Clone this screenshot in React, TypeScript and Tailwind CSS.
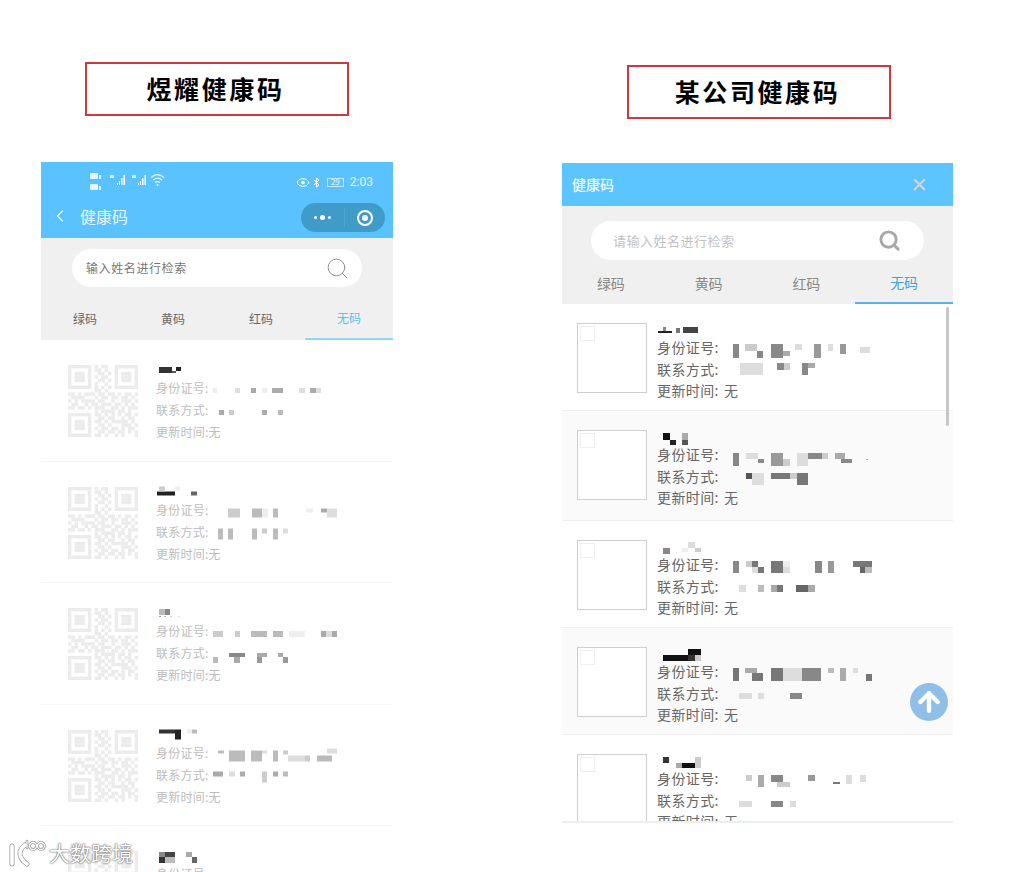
import { ArrowUp, ChevronLeft, Search, X } from 'lucide-react'

type Block = [number, number, number, number, string]

type LeftRow = { name: Block[]; id: Block[]; phone: Block[] }

const CJK = "font-['Noto_Sans_CJK_SC','Noto_Sans',sans-serif]"

const QR = [
  '111111101011001111111',
  '100000101101001000001',
  '101110100110101011101',
  '101110101011001011101',
  '101110100110101011101',
  '100000101001001000001',
  '111111101010101111111',
  '000000001101000000000',
  '110101110110110101101',
  '011110001011011011010',
  '101011110110010011101',
  '011001011011101101010',
  '110110101110011010111',
  '000000001011110110100',
  '111111101101010101101',
  '100000100110110010110',
  '101110101101011111010',
  '101110100110100011101',
  '101110101011011010110',
  '100000100110110110101',
  '111111101101001010001',
]

const leftRows: LeftRow[] = [
  {
    name: [[159, 172, 367, 373, '#333'], [172, 176, 371, 373, '#555'], [176, 181, 367, 371, '#222']],
    id: [
      [213, 217, 388, 393, '#eee'], [235, 240, 388, 393, '#ddd'], [251, 256, 388, 393, '#aaa'],
      [262, 267, 388, 393, '#eee'], [272, 283, 388, 393, '#aaa'], [299, 305, 388, 393, '#ddd'],
      [310, 316, 388, 393, '#aaa'], [316, 321, 388, 393, '#ddd'],
    ],
    phone: [[219, 224, 410, 415, '#aaa'], [229, 234, 410, 415, '#ccc'], [262, 267, 410, 415, '#aaa'], [278, 283, 410, 415, '#bbb']],
  },
  {
    name: [[157, 175, 491, 495, '#222'], [159, 165, 486, 491, '#ccc'], [175, 180, 486, 490, '#eee'], [191, 197, 491, 495, '#666']],
    id: [
      [228, 240, 508, 517, '#ccc'], [252, 262, 508, 517, '#bbb'], [262, 268, 508, 517, '#eee'], [273, 278, 508, 517, '#bbb'],
      [306, 313, 508, 512, '#eee'], [321, 327, 508, 512, '#aaa'], [327, 337, 508, 517, '#ddd'],
    ],
    phone: [
      [218, 223, 528, 539, '#bbb'], [228, 233, 528, 539, '#bbb'], [252, 257, 528, 539, '#bbb'],
      [262, 267, 528, 533, '#ccc'], [273, 278, 528, 539, '#bbb'], [283, 288, 528, 533, '#ddd'],
    ],
  },
  {
    name: [[159, 165, 609, 615, '#bbb'], [165, 170, 609, 615, '#888'], [159, 161, 616, 617, '#999'], [164, 166, 616, 617, '#bbb'], [170, 172, 616, 617, '#ccc'], [178, 180, 616, 617, '#ddd']],
    id: [
      [213, 223, 631, 637, '#ccc'], [235, 240, 631, 637, '#ccc'], [251, 267, 631, 637, '#bbb'], [273, 283, 631, 637, '#bbb'],
      [289, 305, 631, 637, '#eee'], [321, 326, 631, 637, '#aaa'], [326, 332, 631, 637, '#ddd'], [332, 337, 631, 637, '#aaa'],
    ],
    phone: [
      [213, 218, 657, 663, '#bbb'], [229, 245, 653, 657, '#888'], [234, 240, 657, 663, '#aaa'],
      [257, 267, 653, 657, '#aaa'], [257, 262, 657, 663, '#999'], [278, 283, 653, 657, '#aaa'], [283, 288, 657, 663, '#999'],
    ],
  },
  {
    name: [[159, 175, 729, 733, '#333'], [175, 181, 729, 739, '#222'], [187, 192, 729, 733, '#eee'], [192, 197, 729, 733, '#bbb']],
    id: [
      [218, 224, 750, 753, '#bbb'], [229, 245, 750, 761, '#bbb'], [251, 262, 750, 761, '#bbb'], [262, 267, 750, 753, '#ddd'],
      [273, 278, 750, 761, '#bbb'], [283, 288, 750, 754, '#ccc'], [288, 305, 755, 761, '#ddd'], [305, 310, 755, 761, '#ccc'],
      [317, 332, 755, 761, '#bbb'], [327, 337, 748, 753, '#ddd'],
    ],
    phone: [[213, 223, 771, 776, '#aaa'], [229, 235, 771, 776, '#ddd'], [240, 245, 771, 776, '#aaa'], [262, 267, 771, 782, '#ccc'], [273, 278, 771, 776, '#aaa'], [283, 288, 771, 776, '#bbb']],
  },
  {
    name: [[159, 170, 852, 857, '#888'], [165, 175, 852, 857, '#444'], [159, 165, 857, 863, '#333'], [165, 175, 857, 863, '#bbb'], [186, 192, 852, 857, '#aaa'], [192, 197, 857, 863, '#666']],
    id: [],
    phone: [],
  },
]

const rightTops = [304, 411, 521, 628, 735]
const rightHeights = [107, 110, 107, 107, 107]

const rightRows: LeftRow[] = [
  {
    name: [[658, 672, 331, 333, '#222'], [663, 666, 327, 331, '#888'], [676, 680, 328, 333, '#777'], [683, 698, 327, 333, '#444']],
    id: [
      [733, 739, 344, 358, '#888'], [745, 757, 344, 351, '#ccc'], [757, 763, 351, 358, '#888'], [771, 783, 344, 358, '#888'],
      [783, 790, 351, 356, '#aaa'], [795, 802, 344, 350, '#ddd'], [814, 821, 344, 358, '#999'], [828, 833, 344, 351, '#ddd'],
      [840, 846, 344, 354, '#999'], [860, 870, 347, 353, '#ddd'],
    ],
    phone: [[740, 763, 363, 375, '#ddd'], [777, 784, 363, 370, '#888'], [784, 790, 363, 370, '#ccc'], [802, 808, 363, 375, '#888'], [808, 815, 363, 368, '#aaa']],
  },
  {
    name: [[663, 670, 433, 440, '#111'], [670, 676, 440, 445, '#222'], [682, 688, 433, 440, '#aaa'], [682, 688, 440, 445, '#555']],
    id: [
      [733, 739, 453, 466, '#888'], [746, 758, 453, 459, '#ddd'], [758, 764, 459, 463, '#888'], [771, 783, 453, 466, '#999'],
      [783, 790, 459, 466, '#ccc'], [797, 808, 453, 466, '#ddd'], [808, 822, 453, 459, '#888'], [822, 828, 453, 459, '#ccc'],
      [835, 845, 453, 459, '#aaa'], [841, 852, 459, 463, '#888'], [866, 868, 459, 460, '#aaa'],
    ],
    phone: [[746, 752, 473, 479, '#555'], [752, 764, 473, 485, '#ddd'], [771, 790, 473, 479, '#777'], [790, 797, 473, 479, '#ccc'], [797, 808, 473, 485, '#777']],
  },
  {
    name: [[663, 670, 548, 554, '#888'], [682, 688, 548, 552, '#eee'], [688, 695, 542, 548, '#ddd'], [695, 701, 548, 552, '#ccc']],
    id: [
      [733, 739, 561, 573, '#888'], [746, 752, 561, 567, '#ccc'], [752, 758, 561, 567, '#777'], [752, 758, 567, 573, '#ddd'],
      [758, 764, 567, 573, '#777'], [771, 783, 561, 573, '#777'], [783, 790, 567, 573, '#ddd'], [783, 790, 561, 567, '#eee'],
      [815, 822, 561, 573, '#888'], [828, 834, 561, 573, '#999'], [853, 872, 561, 567, '#777'], [860, 865, 567, 573, '#666'], [865, 872, 567, 573, '#bbb'],
    ],
    phone: [[739, 746, 585, 592, '#ddd'], [758, 764, 585, 592, '#bbb'], [771, 777, 585, 592, '#aaa'], [777, 783, 585, 592, '#777'], [796, 808, 585, 592, '#666'], [808, 815, 585, 592, '#aaa']],
  },
  {
    name: [[663, 688, 655, 661, '#111'], [688, 701, 649, 655, '#111'], [688, 695, 655, 661, '#333'], [695, 701, 655, 661, '#ccc']],
    id: [
      [733, 739, 668, 681, '#777'], [745, 757, 668, 673, '#aaa'], [752, 763, 673, 681, '#777'], [771, 783, 668, 681, '#777'],
      [783, 802, 668, 681, '#ddd'], [802, 821, 668, 681, '#888'], [828, 834, 668, 673, '#bbb'], [840, 846, 668, 681, '#aaa'],
      [853, 858, 668, 673, '#ddd'], [866, 872, 674, 681, '#777'],
    ],
    phone: [[739, 752, 693, 699, '#ddd'], [758, 764, 693, 699, '#ddd'], [790, 802, 693, 699, '#888']],
  },
  {
    name: [[663, 669, 757, 763, '#333'], [676, 682, 763, 768, '#aaa'], [682, 695, 763, 768, '#111'], [695, 701, 757, 768, '#ccc']],
    id: [
      [746, 752, 775, 781, '#ccc'], [758, 764, 775, 787, '#aaa'], [771, 783, 775, 782, '#888'], [777, 790, 782, 787, '#ccc'],
      [808, 815, 775, 781, '#999'], [833, 840, 782, 784, '#777'], [846, 852, 775, 784, '#ddd'], [860, 866, 775, 782, '#ddd'],
    ],
    phone: [[739, 752, 801, 807, '#ddd'], [771, 783, 801, 807, '#888'], [790, 796, 801, 807, '#ddd']],
  },
]

// pixelated bits use page coordinates, the viewBox shifts them into the row
function Mosaic({ x, y, w, blocks }: { x: number; y: number; w: number; blocks: Block[] }) {
  return (
    <svg
      width={w}
      height={22}
      viewBox={`${x} ${y} ${w} 22`}
      className="shrink-0 overflow-visible blur-[0.5px]"
    >
      {blocks.map(([x1, x2, y1, y2, c], i) => (
        <rect key={i} x={x1} y={y1} width={x2 - x1} height={y2 - y1} fill={c} />
      ))}
    </svg>
  )
}

function QrCode() {
  return (
    <svg width={70} height={72} viewBox="0 0 21 21" preserveAspectRatio="none" className="shrink-0 blur-[0.7px]">
      {QR.map((line, y) =>
        line.split('').map((v, x) =>
          v === '1' ? <rect key={`${x}-${y}`} x={x} y={y} width={1} height={1} fill="#ebebeb" /> : null
        )
      )}
    </svg>
  )
}

function TitleBox({ text, className }: { text: string; className: string }) {
  return (
    <div
      className={`flex h-[54px] w-[264px] items-center justify-center border-2 border-[#cb3a40] pr-[3px] text-[25px] font-bold tracking-[2.6px] text-black ${className}`}
    >
      {text}
    </div>
  )
}

function StatusIcons() {
  return (
    <svg width={85} height={28} viewBox="0 0 85 28" className="blur-[0.3px]">
      <rect x={5} y={5} width={8} height={6} rx={1} fill="#e4f5ff" />
      <rect x={5} y={16} width={8} height={6} rx={1} fill="#e4f5ff" />
      <rect x={14} y={7} width={2} height={4} fill="#e4f5ff" />
      <rect x={14} y={18} width={2} height={4} fill="#e4f5ff" />
      <rect x={25} y={7} width={4} height={3} fill="#cfeeff" />
      <rect x={32} y={15} width={1} height={2} fill="#fff" />
      <rect x={34} y={13} width={1} height={4} fill="#fff" />
      <rect x={36} y={10} width={1.5} height={7} fill="#fff" />
      <rect x={38.500} y={7} width={1.5} height={10} fill="#fff" />
      <rect x={47} y={7} width={4} height={3} fill="#cfeeff" />
      <rect x={53} y={15} width={1} height={2} fill="#fff" />
      <rect x={55} y={13} width={1} height={4} fill="#fff" />
      <rect x={57} y={10} width={1.5} height={7} fill="#fff" />
      <rect x={59.500} y={7} width={1.5} height={10} fill="#fff" />
      <path d="M66 9.5c4-3.5 9-3.5 13 0M68 12c3-2.5 6-2.5 9 0M70 14.500c2-1.500 3-1.500 5 0" fill="none" stroke="#eaf8ff" strokeWidth={1.1} />
      <circle cx={72.500} cy={17} r={1} fill="#eaf8ff" />
    </svg>
  )
}

function LeftPanel() {
  return (
    <div className="overflow-hidden">
      <div className="h-[76px] bg-[#5ac2fe]">
        <div className="flex h-[35px] justify-between pl-[44px] pr-[20px] pt-[6px]">
          <StatusIcons />
          <div className="mt-[6px] flex h-[16px] items-center gap-[4px] text-[12px] text-[#e6f6ff]">
            <svg width={12} height={9} viewBox="0 0 12 9">
              <ellipse cx={6} cy={4.500} rx={5.500} ry={3.800} fill="none" stroke="#fff" />
              <circle cx={6} cy={4.500} r={1.800} fill="#fff" />
            </svg>
            <svg width={7} height={11} viewBox="0 0 7 11">
              <path d="M1 3l5 5-2.500 2V1L6 3 1 8" fill="none" stroke="#fff" />
            </svg>
            <span className="ml-[3px] flex h-[9px] w-[17px] items-center justify-center border border-[#bfe8ff] text-[8px]">29</span>
            <span className="ml-[2px] font-['Roboto',sans-serif]">2:03</span>
          </div>
        </div>
        <div className="flex h-[41px] items-center justify-between pl-[9px] pr-[8px]">
          <div className="-mt-[3px] flex items-center text-[16px] text-[#eaf7ff]">
            <ChevronLeft size={20} strokeWidth={1.5} />
            <span className="ml-[10px]">健康码</span>
          </div>
          <div className="flex h-[29px] w-[84px] items-center rounded-full bg-[#3f9cc9]">
            <div className="flex w-[43px] items-center justify-center gap-[3px]">
              <span className="size-[3px] rounded-full bg-white" />
              <span className="size-[5px] rounded-full bg-white" />
              <span className="size-[3px] rounded-full bg-white" />
            </div>
            <div className="h-[19px] w-px bg-[#4ba7d3]" />
            <div className="ml-[12px] flex size-[16px] items-center justify-center rounded-full border-2 border-white">
              <span className="size-[6px] rounded-full bg-white" />
            </div>
          </div>
        </div>
      </div>

      <div className="h-[102px] bg-[#f0f0f0] pt-[11px]">
        <div className="mx-[31px] flex h-[38px] items-center justify-between rounded-full bg-white pl-[14px] pr-[12px] text-[12px] tracking-[0.6px] text-[#777]">
          <span>输入姓名进行检索</span>
          <Search size={25} strokeWidth={0.9} className="text-[#888]" />
        </div>
        <div className="mt-[11px] flex h-[42px] text-[12px] text-[#666]">
          <div className="flex flex-1 items-center justify-center">绿码</div>
          <div className="flex flex-1 items-center justify-center">黄码</div>
          <div className="flex flex-1 items-center justify-center">红码</div>
          <div className="flex flex-1 items-center justify-center border-b-2 border-[#8fd6f2] text-[#5ac0ea]">无码</div>
        </div>
      </div>

      <div>
        {leftRows.map((row, i) => {
          const top = 340 + i * 121.5
          return (
            <div key={i} className="flex h-[121.5px] items-start gap-[18px] border-b border-[#f6f6f6] pl-[27px] pt-[15px]">
              <div className="mt-[10px]">
                <QrCode />
              </div>
              <div className="whitespace-nowrap text-[12px] leading-[22px] tracking-[0.25px] text-[#bdbdbd]">
                <Mosaic x={156} y={top + 15} w={100} blocks={row.name} />
                <div className="flex">
                  <span className="w-[52px] shrink-0">身份证号:</span>
                  <Mosaic x={208} y={top + 37} w={130} blocks={row.id} />
                </div>
                <div className="flex">
                  <span className="w-[52px] shrink-0">联系方式:</span>
                  <Mosaic x={208} y={top + 59} w={130} blocks={row.phone} />
                </div>
                <div>更新时间:无</div>
              </div>
            </div>
          )
        })}
      </div>
    </div>
  )
}

function RightPanel() {
  return (
    <div>
      <div className="flex h-[43px] items-center justify-between bg-[#5cc5ff] pl-[10px] pr-[24px] text-[14px] font-medium text-[#effaff]">
        <span>健康码</span>
        <X size={19} strokeWidth={3} className="text-[#c6d8e2]" />
      </div>

      <div className="h-[98px] bg-[#f0f0f0] pt-[15px]">
        <div className="mx-[29px] flex h-[39px] items-center justify-between rounded-full bg-white pl-[22px] pr-[23px] text-[13px] tracking-[0.5px] text-[#c2c2c2]">
          <span>请输入姓名进行检索</span>
          <Search size={23} strokeWidth={3} className="text-[#a8a8a8]" />
        </div>
        <div className="flex h-[44px] text-[14px] text-[#888]">
          <div className="flex flex-1 items-center justify-center pt-[2px]">绿码</div>
          <div className="flex flex-1 items-center justify-center pt-[2px]">黄码</div>
          <div className="flex flex-1 items-center justify-center pt-[2px]">红码</div>
          <div className="flex flex-1 items-center justify-center border-b-2 border-[#58b4e6] pt-[2px] text-[#3fa3dd]">无码</div>
        </div>
      </div>

      <div className="relative h-[519px] overflow-hidden border-b-2 border-[#eeeeee]">
        {rightRows.map((row, i) => {
          const top = rightTops[i]
          return (
            <div
              key={i}
              style={{ height: rightHeights[i] }}
              className={`flex items-start gap-[10px] border-b border-[#efefef] pl-[15px] ${i % 2 === 1 ? 'bg-[#fafafa]' : 'bg-white'}`}
            >
              <div className="relative mt-[19px] size-[70px] shrink-0 border border-[#cfcfcf] bg-white">
                <div className="absolute left-[2px] top-[2px] size-[15px] border border-[#eeeeee]" />
              </div>
              <div className="whitespace-nowrap pt-[10px] text-[14px] leading-[22px] tracking-[0.4px] text-[#666]">
                <Mosaic x={657} y={top + 10} w={100} blocks={row.name} />
                <div className="flex">
                  <span className="w-[63px] shrink-0">身份证号:</span>
                  <Mosaic x={720} y={top + 32} w={160} blocks={row.id} />
                </div>
                <div className="flex">
                  <span className="w-[63px] shrink-0">联系方式:</span>
                  <Mosaic x={720} y={top + 54} w={160} blocks={row.phone} />
                </div>
                <div className="-mt-[1px]">
                  更新时间:<span className="ml-[5px]">无</span>
                </div>
              </div>
            </div>
          )
        })}
        <div className="absolute left-[384px] top-[3px] h-[119px] w-[3px] rounded-full bg-[#c6c6c6]" />
        <div className="absolute left-[348px] top-[379px] flex size-[38px] items-center justify-center rounded-full bg-[#8fbfe7]">
          <ArrowUp size={30} strokeWidth={3.5} className="text-white" />
        </div>
      </div>
    </div>
  )
}

export default function App() {
  return (
    <div className={`relative flex h-[872px] w-[1026px] overflow-hidden bg-white ${CJK}`}>
      <div className="ml-[41px] w-[352px] shrink-0 pt-[62px]">
        <TitleBox text="煜耀健康码" className="mb-[46px] ml-[44px]" />
        <LeftPanel />
      </div>
      <div className="ml-[169px] w-[391px] shrink-0 pt-[65px]">
        <TitleBox text="某公司健康码" className="mb-[44px] ml-[65px]" />
        <RightPanel />
      </div>

      {/* watermark sits over the last row */}
      <div className="absolute left-[9px] top-[838px] flex items-center gap-[2px] text-[21px] leading-[28px] text-white [text-shadow:0_0_2px_#555,0_0_1px_#555]">
        <svg width={38} height={28} viewBox="0 0 38 28" className="overflow-visible">
          <g fill="none" stroke="#999" strokeWidth={5} strokeLinecap="round">
            <path d="M3 8v18M16 7C9 12 9 20 18 26" />
            <path d="M18 3v7" strokeWidth={2.600} />
            <circle cx={24} cy={8} r={3.500} strokeWidth={2.800} />
            <circle cx={32} cy={8} r={3.500} strokeWidth={2.800} />
          </g>
          <g fill="none" stroke="#fff" strokeWidth={3.500} strokeLinecap="round">
            <path d="M3 8v18M16 7C9 12 9 20 18 26" />
            <path d="M18 3v7" strokeWidth={1.200} />
            <circle cx={24} cy={8} r={3.500} strokeWidth={1.300} />
            <circle cx={32} cy={8} r={3.500} strokeWidth={1.300} />
          </g>
        </svg>
        <span>大数跨境</span>
      </div>
    </div>
  )
}
